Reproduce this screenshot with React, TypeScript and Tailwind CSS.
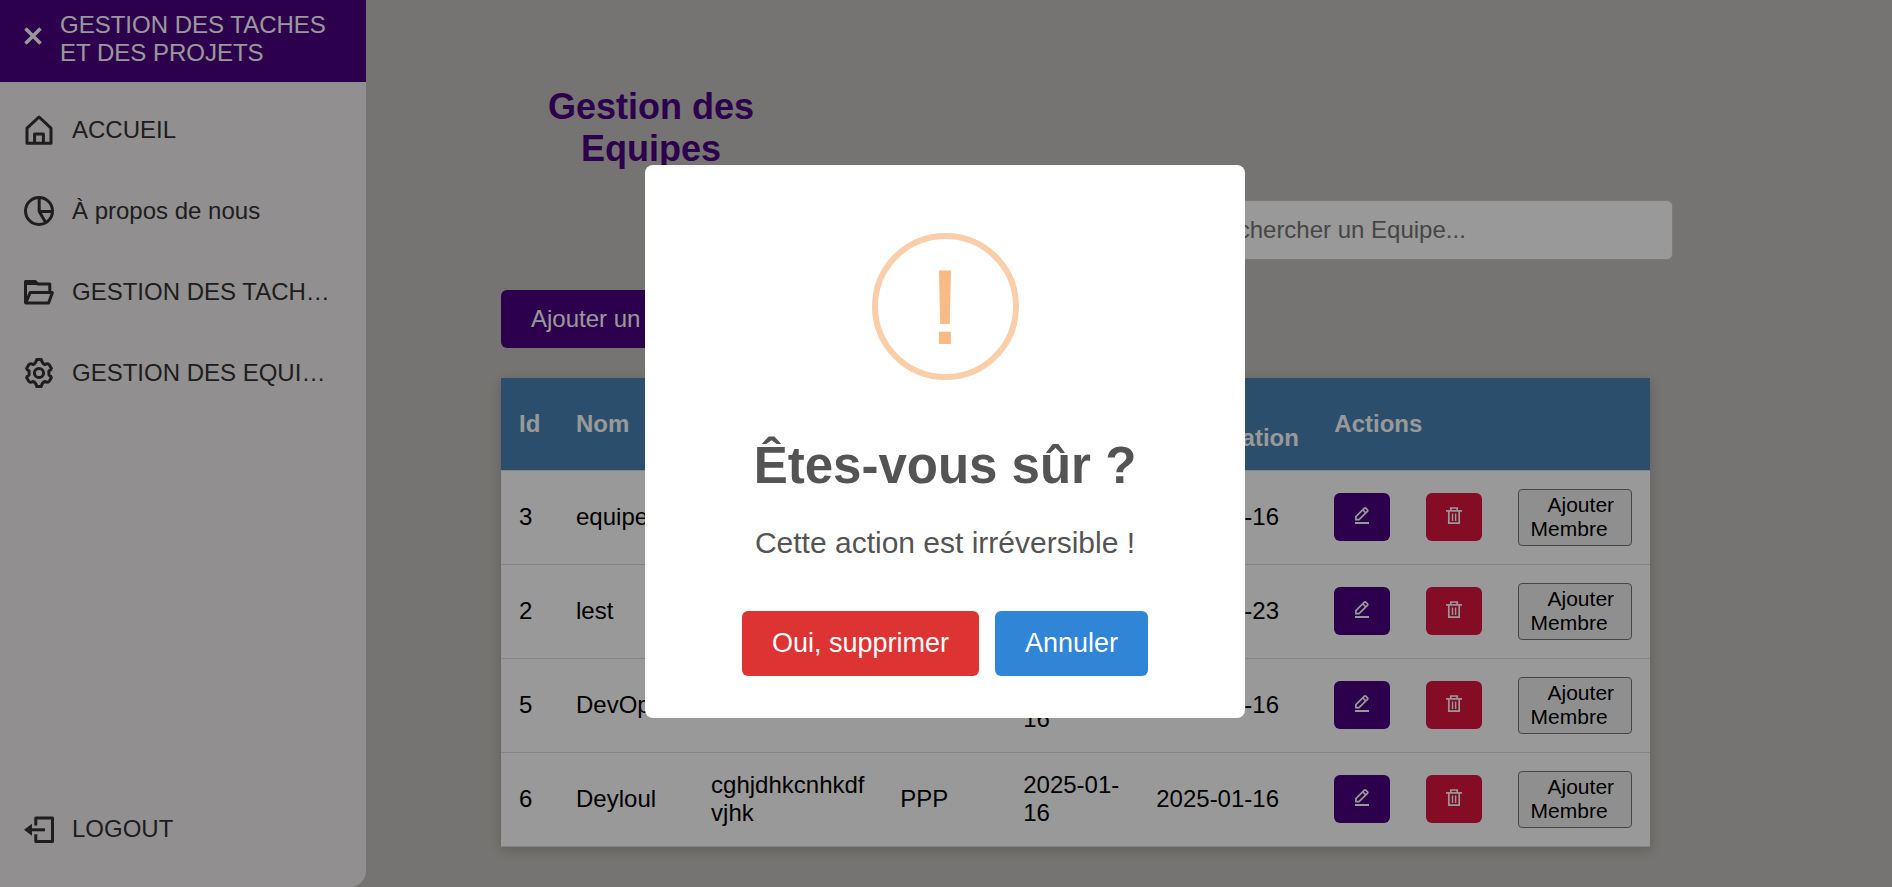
import type { ReactNode } from "react";

type Team = {
  id: number;
  name: string;
  description: string;
  project: string;
  created: string;
  updated: string;
};

const teams: Team[] = [
  { id: 3, name: "equipe", description: "test", project: "PPP", created: "2025-01-16", updated: "2025-01-16" },
  { id: 2, name: "lest", description: "test", project: "PPP", created: "2025-01-23", updated: "2025-01-23" },
  { id: 5, name: "DevOps", description: "test", project: "PPP", created: "2025-01-16", updated: "2025-01-16" },
  { id: 6, name: "Deyloul", description: "cghjdhkcnhkdfvjhk", project: "PPP", created: "2025-01-16", updated: "2025-01-16" },
];

function Icon({ children }: { children: ReactNode }) {
  return (
    <svg
      viewBox="0 0 30 30"
      className="size-[30px] shrink-0"
      fill="none"
      stroke="currentColor"
      strokeWidth="3"
      strokeLinejoin="round"
      aria-hidden="true"
    >
      {children}
    </svg>
  );
}

const HomeIcon = () => (
  <Icon>
    <path d="M15 2 L27 13.2 V28.2 H3 V13.2 Z" />
    <path d="M10.6 28 V18.9 H19.4 V28" />
  </Icon>
);

const PieIcon = () => (
  <Icon>
    <circle cx="15" cy="15" r="13.5" />
    <path d="M15.2 1.5 V15.6 H28.5 M15.2 15.6 L22 27" />
  </Icon>
);

const FolderIcon = () => (
  <Icon>
    <path d="M1.5 26 V4.4 H11 L13.6 6.9 H25.8 V15" />
    <path d="M1.8 26 L6.2 15.4 H28.4 L24.6 26 Z" />
    <path d="M1.5 3.5 H11.5 L14.5 8 H1.5 Z" fill="currentColor" stroke="none" />
  </Icon>
);

const GearIcon = () => (
  <Icon>
    <circle cx="15" cy="15" r="4.6" />
    <path d="M12.7 1.5 H17.3 Q18 5.3 20.8 6.6 Q24 4.9 25.4 7 L27.4 10.4 Q26.9 12.2 24.9 13 V17 Q26.9 17.8 27.4 19.6 L25.4 23 Q24 25.1 20.8 23.4 Q18 24.7 17.3 28.5 H12.7 Q12 24.7 9.2 23.4 Q6 25.1 4.6 23 L2.6 19.6 Q3.1 17.8 5.1 17 V13 Q3.1 12.2 2.6 10.4 L4.6 7 Q6 4.9 9.2 6.6 Q12 5.3 12.7 1.5 Z" />
  </Icon>
);

const LogoutIcon = () => (
  <Icon>
    <path d="M11.8 11.5 V4 H28.5 V27.6 H11.8 V20.2" />
    <path d="M6 15.8 H21" />
    <path d="M0 15.8 L8 9.8 V21.8 Z" fill="currentColor" stroke="none" />
  </Icon>
);

const EditIcon = () => (
  <svg
    viewBox="0 0 14 17"
    className="mb-[3px] h-[17px] w-[14px]"
    fill="none"
    stroke="currentColor"
    strokeWidth="1.7"
    aria-hidden="true"
  >
    <path d="M0.9 12.7 V9.6 L9.4 1.2 Q10.2 0.6 11 1.3 L12.5 2.8 Q13.1 3.6 12.4 4.4 L4 12.7 Z" />
    <path d="M8 3 L10.7 5.8" />
    <path d="M0 16 H14" strokeWidth="2" />
  </svg>
);

const TrashIcon = () => (
  <svg
    viewBox="0 0 16 17"
    className="mb-[3px] h-[17px] w-4"
    fill="none"
    stroke="currentColor"
    strokeWidth="1.7"
    aria-hidden="true"
  >
    <path d="M0 3.9 H16" />
    <path d="M4.8 3.6 V1 H11.2 V3.6" />
    <path d="M2.8 4 V16.1 H13.2 V4" />
    <path d="M6.5 6.4 V14 M9.6 6.4 V14" strokeWidth="1.4" />
  </svg>
);

function NavItem({ icon, label }: { icon: ReactNode; label: string }) {
  return (
    <a href="#" className="flex h-[81px] items-center gap-[18px] pr-9 pl-6 text-2xl text-[#333333]">
      {icon}
      <span className="min-w-0 truncate">{label}</span>
    </a>
  );
}

function Sidebar() {
  return (
    <aside className="flex w-[366px] shrink-0 flex-col rounded-br-2xl bg-[#f2efef]">
      <header className="flex items-start gap-[18px] bg-[#4b0082] pt-[11px] pr-6 pb-[15px] pl-6 text-white">
        <button type="button" aria-label="Fermer le menu" className="mt-4 shrink-0">
          <svg viewBox="0 0 18 18" className="size-[18px]" stroke="currentColor" strokeWidth="3.6" aria-hidden="true">
            <path d="M1.5 1.5 L16.5 16.5 M16.5 1.5 L1.5 16.5" />
          </svg>
        </button>
        <p className="text-2xl leading-7">GESTION DES TACHES ET DES PROJETS</p>
      </header>
      <nav className="flex flex-1 flex-col pt-[7px] pb-[18px]">
        <NavItem icon={<HomeIcon />} label="ACCUEIL" />
        <NavItem icon={<PieIcon />} label="À propos de nous" />
        <NavItem icon={<FolderIcon />} label="GESTION DES TACHES" />
        <NavItem icon={<GearIcon />} label="GESTION DES EQUIPES" />
        <div className="mt-auto">
          <NavItem icon={<LogoutIcon />} label="LOGOUT" />
        </div>
      </nav>
    </aside>
  );
}

function TeamRow({ team }: { team: Team }) {
  return (
    <tr className="border-b border-[#dddddd]">
      <td className="px-[18px] pt-[17px] pb-[19px]">{team.id}</td>
      <td className="px-[18px] pt-[17px] pb-[19px]">{team.name}</td>
      <td className="pt-[17px] pr-4 pb-[19px] pl-[18px] break-all">{team.description}</td>
      <td className="px-[18px] pt-[17px] pb-[19px]">{team.project}</td>
      <td className="px-[18px] pt-[17px] pb-[19px]">{team.created}</td>
      <td className="px-[18px] pt-[17px] pb-[19px] whitespace-nowrap">{team.updated}</td>
      <td className="px-[18px] pt-[17px] pb-[19px]">
        <button
          type="button"
          aria-label="Modifier"
          className="flex h-12 w-14 items-center justify-center rounded-md bg-[#4b0082] text-white"
        >
          <EditIcon />
        </button>
      </td>
      <td className="px-[18px] pt-[17px] pb-[19px]">
        <button
          type="button"
          aria-label="Supprimer"
          className="flex h-12 w-14 items-center justify-center rounded-md bg-[#dc143c] text-white"
        >
          <TrashIcon />
        </button>
      </td>
      <td className="p-[18px]">
        <button
          type="button"
          className="block w-full rounded-sm border border-[#767676] bg-[#efefef] px-2 pt-[3px] pb-1 text-[21px] leading-6"
        >
          &nbsp;&nbsp;Ajouter Membre&nbsp;&nbsp;
        </button>
      </td>
    </tr>
  );
}

function TeamTable() {
  return (
    <table className="mt-[30px] w-[98%] table-fixed border-collapse bg-white text-left text-2xl leading-7 shadow-[0_3px_12px_rgba(0,0,0,0.2)]">
      <colgroup>
        <col className="w-[57px]" />
        <col className="w-[135px]" />
        <col className="w-[189px]" />
        <col className="w-[123px]" />
        <col className="w-[133px]" />
        <col className="w-[178px]" />
        <col className="w-[92px]" />
        <col className="w-[92px]" />
        <col className="w-[149px]" />
      </colgroup>
      <thead className="bg-[#4682b4] text-white">
        <tr className="border-b border-[#dddddd]">
          <th className="p-[18px]">Id</th>
          <th className="p-[18px]">Nom</th>
          <th className="p-[18px]">Description</th>
          <th className="p-[18px]">Projet</th>
          <th className="p-[18px]">Date création</th>
          <th className="p-[18px]">Date modification</th>
          <th className="p-[18px]" colSpan={3}>
            Actions
          </th>
        </tr>
      </thead>
      <tbody>
        {teams.map((team) => (
          <TeamRow key={team.id} team={team} />
        ))}
      </tbody>
    </table>
  );
}

function ConfirmDialog() {
  return (
    <div className="fixed inset-0 z-10 flex items-center justify-center bg-black/40 pr-0.5 pb-1">
      <div
        role="alertdialog"
        aria-modal="true"
        aria-labelledby="confirm-title"
        aria-describedby="confirm-text"
        className="flex w-[600px] flex-col items-center rounded-lg bg-white pt-[68px] pb-[42px] text-[#545454]"
      >
        <div className="flex size-[147px] items-center justify-center rounded-full border-6 border-[#facea8] text-[104px] leading-none text-[#f8bb86] [-webkit-text-stroke:2px_#f8bb86]">
          !
        </div>
        <h2 id="confirm-title" className="mt-[57px] text-[51px] leading-[58px] font-bold">
          Êtes-vous sûr ?
        </h2>
        <p id="confirm-text" className="mt-[31px] text-[30px] leading-[34px]">
          Cette action est irréversible !
        </p>
        <div className="mt-[51px] flex gap-4 text-[27px] leading-[31px] text-white">
          <button type="button" className="rounded-md bg-[#dd3333] px-[30px] py-[17px]">
            Oui, supprimer
          </button>
          <button type="button" className="rounded-md bg-[#3085d6] px-[30px] py-[17px]">
            Annuler
          </button>
        </div>
      </div>
    </div>
  );
}

export default function App() {
  return (
    <div className="flex min-h-screen bg-[#c4c2be] font-['Liberation_Sans',Arial,sans-serif] text-black">
      <Sidebar />
      <main className="flex min-w-0 flex-1 flex-col items-start pt-[86px] pr-[219px] pb-10 pl-[135px]">
        <h1 className="w-[300px] text-center text-4xl leading-[42px] font-bold text-[#4b0082]">
          Gestion des Equipes
        </h1>
        <input
          type="search"
          aria-label="Rechercher un Equipe"
          placeholder="Rechercher un Equipe..."
          className="mt-[30px] h-[60px] w-[482px] self-end rounded-md border border-[#cccccc] bg-white px-[15px] text-2xl placeholder:text-[#757575]"
        />
        <button type="button" className="mt-[30px] h-[58px] rounded-md bg-[#4b0082] px-[30px] text-2xl text-white">
          Ajouter un Equipe
        </button>
        <TeamTable />
      </main>
      <ConfirmDialog />
    </div>
  );
}
